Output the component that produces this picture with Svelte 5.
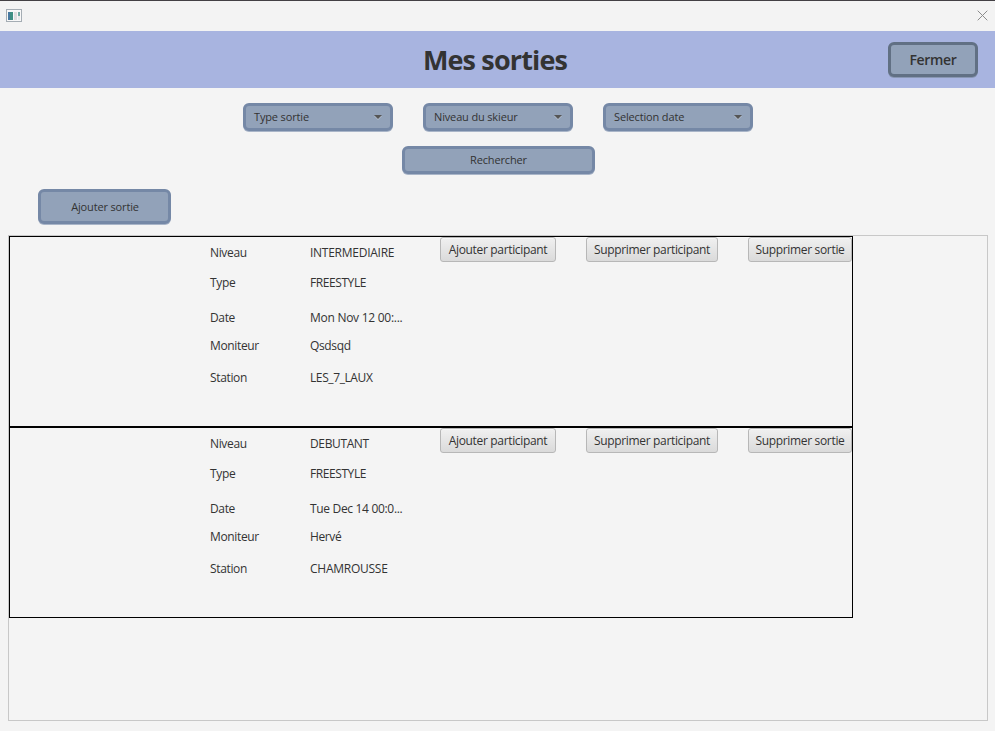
<script>
  const filters = ['Type sortie', 'Niveau du skieur', 'Selection date'];
  const outings = [
    {
      fields: [
        ['Niveau', 'INTERMEDIAIRE', -0.26],
        ['Type', 'FREESTYLE', -0.42],
        ['Date', 'Mon Nov 12 00:...', -0.27],
        ['Moniteur', 'Qsdsqd', -0.35],
        ['Station', 'LES_7_LAUX', -0.4]
      ]
    },
    {
      fields: [
        ['Niveau', 'DEBUTANT', -0.37],
        ['Type', 'FREESTYLE', -0.42],
        ['Date', 'Tue Dec 14 00:0...', -0.32],
        ['Moniteur', 'Hervé', -0.4],
        ['Station', 'CHAMROUSSE', -0.25]
      ]
    }
  ];
</script>

<div class="window">
  <div class="titlebar">
    <svg class="app" width="16" height="13" viewBox="0 0 16 13">
      <rect x="0.5" y="0.5" width="15" height="12" fill="#f8f8f8" stroke="#a5adb4" />
      <rect x="2" y="3" width="5" height="8" fill="#3f8f83" />
      <path d="M2 3h2v8H2z" fill="#4779a0" />
      <rect x="8" y="3" width="3" height="8" fill="#dedede" />
      <rect x="12" y="3" width="2" height="4" fill="#75aca5" />
      <rect x="12" y="7" width="2" height="4" fill="#e9e9e9" />
    </svg>
    <svg width="11" height="11" viewBox="0 0 11 11">
      <path d="M0.7 0.7l9.6 9.6M10.3 0.7L0.7 10.3" stroke="#8b8b8b" fill="none" />
    </svg>
  </div>
  <header>
    <h1>Mes sorties</h1>
    <button class="tool close">Fermer</button>
  </header>
  <div class="filters">
    {#each filters as label}
      <button class="tool combo"><span>{label}</span><i></i></button>
    {/each}
  </div>
  <button class="tool search">Rechercher</button>
  <button class="tool add">Ajouter sortie</button>
  <main>
    {#each outings as outing}
      <article>
        <dl>
          {#each outing.fields as [name, value, spacing]}
            <dt>{name}</dt>
            <dd style="letter-spacing: {spacing}px">{value}</dd>
          {/each}
        </dl>
        <div class="actions">
          <button class="a">Ajouter participant</button>
          <button class="b">Supprimer participant</button>
          <button class="c">Supprimer sortie</button>
        </div>
      </article>
    {/each}
  </main>
</div>

<style>
  :global(body) { margin: 0; }
  .window {
    box-sizing: border-box;
    width: 995px;
    height: 731px;
    display: flex;
    flex-direction: column;
    overflow: hidden;
    background: #f4f4f4;
    border-top: 1px solid #434044;
    color: #333;
    font: 12px/16px "Open Sans", "Noto Sans", sans-serif;
  }
  .titlebar {
    height: 30px;
    box-sizing: border-box;
    padding: 0 7px 2px 6px;
    display: flex;
    align-items: center;
    justify-content: space-between;
    background: #f3f3f3;
  }
  header {
    height: 57px;
    display: grid;
    grid-template-columns: 1fr auto 1fr;
    align-items: center;
    background: #a8b4e0;
  }
  h1 {
    grid-column: 2;
    margin: 0 5px 0 0;
    font-size: 27px;
    line-height: 36px;
    font-weight: 700;
    letter-spacing: -0.85px;
  }
  button {
    box-sizing: border-box;
    margin: 0;
    padding: 0;
    color: #333;
    font: inherit;
    white-space: nowrap;
  }
  .tool {
    background: #92a2b9;
    border: 3px solid #7588a6;
    border-radius: 6px;
    box-shadow: 0 1px 0 #a9b5c8;
    font-size: 11px;
    letter-spacing: -0.15px;
  }
  .close {
    justify-self: end;
    width: 90px;
    height: 35px;
    margin-right: 17px;
    border-color: #617084;
    box-shadow: 0 1px 0 #8997b3;
    font-size: 14px;
    font-weight: 600;
    letter-spacing: -0.3px;
  }
  .filters {
    display: flex;
    gap: 30px;
    margin: 15px 0 0 243px;
  }
  .combo {
    width: 150px;
    height: 28px;
    padding: 0 8px;
    display: flex;
    align-items: center;
    justify-content: space-between;
  }
  .combo i {
    border: 4px solid transparent;
    border-top-color: #555;
    border-bottom: 0;
    filter: drop-shadow(0 1px 0 #b5bfce);
  }
  .search {
    width: 193px;
    height: 28px;
    margin: 15px 0 0 402px;
  }
  .add {
    width: 133px;
    height: 35px;
    margin: 15px 0 0 38px;
    padding-left: 1px;
  }
  main {
    box-sizing: border-box;
    width: 980px;
    height: 486px;
    margin: 11px 0 0 8px;
    border: 1px solid #c8c8c8;
  }
  article {
    box-sizing: border-box;
    width: 844px;
    height: 191px;
    display: flex;
    border: 1px solid #000;
  }
  dl {
    margin: 0 30px 0 200px;
    display: grid;
    grid-template-columns: 100px 100px;
    grid-template-rows: 31px 30px 40px 16px 48px;
    align-content: start;
    align-items: center;
  }
  dt, dd { margin: 0; white-space: nowrap; }
  dt { letter-spacing: -0.35px; }
  .actions {
    display: flex;
    align-items: flex-start;
    gap: 30px;
  }
  .actions button {
    height: 25px;
    border: 1px solid #b7b7b7;
    border-radius: 3px;
    background: linear-gradient(#f0f0f0, #dadada);
    box-shadow: inset 0 1px 0 #f7f7f7;
    letter-spacing: -0.33px;
    flex: none;
  }
  .a { width: 116px; }
  .b { width: 132px; }
  .c { width: 104px; }
</style>
